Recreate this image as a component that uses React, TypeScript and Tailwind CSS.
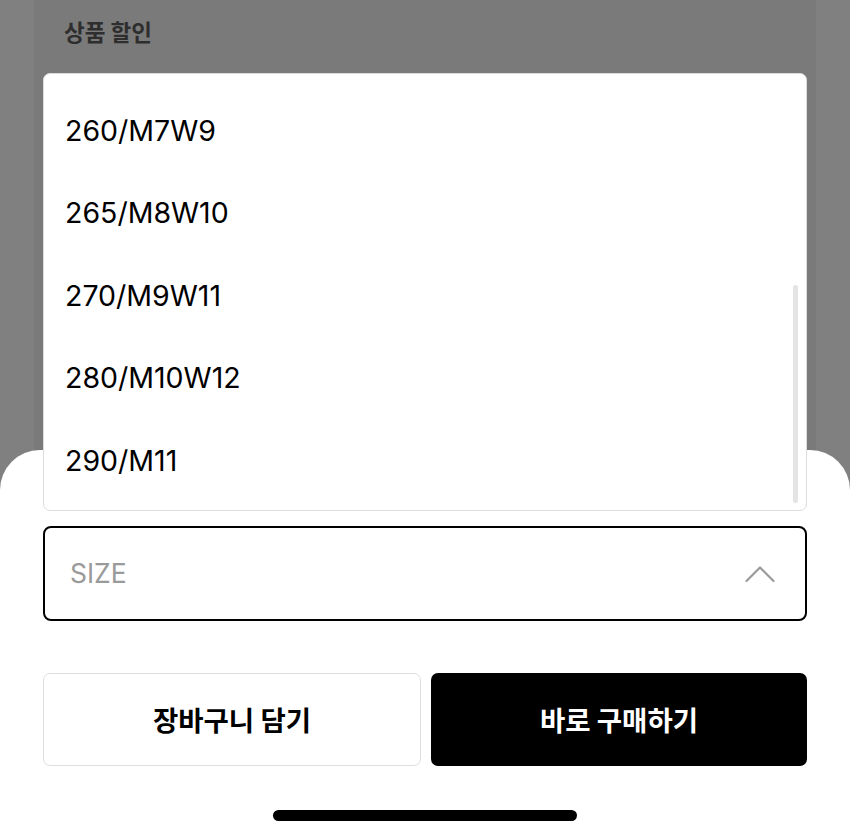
import { useState } from "react";

const sizes = ["260/M7W9", "265/M8W10", "270/M9W11", "280/M10W12", "290/M11"];

const sans = "font-['Inter','Noto_Sans_CJK_KR',sans-serif]";
const kr = "font-['Noto_Sans_CJK_KR','Noto_Sans',sans-serif]";

function ChevronUp() {
  return (
    <svg width="30" height="19" viewBox="0 0 30 19" fill="none">
      <path
        d="M1.5 17L15 3.5L28.5 17"
        stroke="#9a9a9a"
        strokeWidth="2.2"
        strokeLinecap="round"
        strokeLinejoin="round"
      />
    </svg>
  );
}

function SizeMenu({ onPick }: { onPick: (s: string) => void }) {
  return (
    <div className="absolute left-[43px] top-[73px] w-[764px] h-[438px] bg-white border-[1.5px] border-[#dcdcdc] rounded-[7px] overflow-hidden z-20">
      <ul className="pt-[16px]">
        {sizes.map((s) => (
          <li
            key={s}
            onClick={() => onPick(s)}
            className={`h-[82.5px] flex items-center pl-[21px] text-[28.5px] text-black ${sans}`}
          >
            {s}
          </li>
        ))}
      </ul>
      <div className="absolute right-[8px] top-[211px] w-[5px] h-[218px] rounded-full bg-[#e4e4e4]" />
    </div>
  );
}

export default function App() {
  const [size, setSize] = useState<string | null>(null);

  return (
    <div className="relative w-[850px] h-[838px] overflow-hidden bg-[#808080]">
      {/* dimmed product page behind the sheet */}
      <div className="mx-[34px] h-full bg-[#7a7a7a] px-[30px] pt-[15px]">
        <h2 className={`text-[22.5px] font-bold text-[#2e2e2e] leading-[32px] ${kr}`}>
          상품 할인
        </h2>
      </div>

      <SizeMenu onPick={setSize} />

      {/* bottom sheet */}
      <div className="absolute left-0 right-0 top-[450px] bottom-0 bg-white rounded-t-[40px] flex flex-col px-[43px] pt-[76px]">
        <div className="h-[95px] border-2 border-black rounded-[8px] flex items-center justify-between pl-[25px] pr-[30px]">
          <span className={`text-[26.5px] ${size ? "text-black" : "text-[#9a9a9a]"} ${sans}`}>
            {size ?? "SIZE"}
          </span>
          <ChevronUp />
        </div>

        <div className="mt-[52px] flex gap-[10px]">
          <button
            className={`flex-1 h-[93px] border-[1.5px] border-[#dedede] rounded-[7px] bg-white text-black text-[27.5px] font-bold ${kr}`}
          >
            장바구니 담기
          </button>
          <button
            className={`flex-1 h-[93px] rounded-[7px] bg-black text-white text-[27.5px] font-bold ${kr}`}
          >
            바로 구매하기
          </button>
        </div>

        <div className="mt-[44px] flex justify-center">
          <div className="w-[304px] h-[11px] rounded-full bg-black" />
        </div>
      </div>
    </div>
  );
}
